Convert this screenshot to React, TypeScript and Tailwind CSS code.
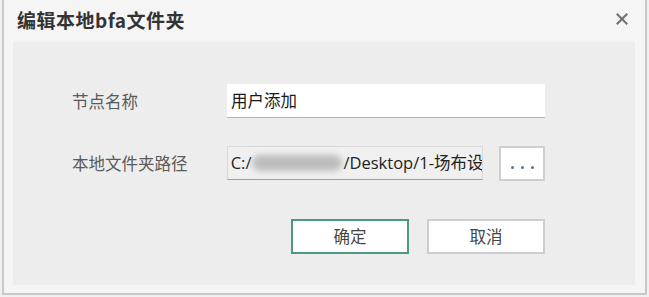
const cjk = { fontFamily: '"Noto Sans CJK SC", "Noto Sans", sans-serif' };
const path = { fontFamily: '"Open Sans", "Noto Sans CJK SC", sans-serif' };

function CloseIcon() {
  return (
    <svg width="12" height="12" viewBox="0 0 12 12" className="text-[#6f6f6f]">
      <path d="M1.5 1.5 L10.5 10.5 M10.5 1.5 L1.5 10.5" stroke="currentColor" strokeWidth="2" strokeLinecap="square" />
    </svg>
  );
}

export default function App() {
  return (
    <div className="w-[649px] h-[297px] bg-[#f0f0f0] px-[2px] pb-[2px]" style={cjk}>
      <div className="h-full flex flex-col bg-[#f5f5f5] border-x-2 border-b-2 border-[#c9c9c9]">
        {/* title */}
        <div className="h-[42px] flex items-center justify-between pl-[13px] pr-[17px]">
          <span className="text-[19px] font-bold text-[#333] tracking-[0.5px] -mt-[1px]">编辑本地bfa文件夹</span>
          <span className="-mt-[4px]"><CloseIcon /></span>
        </div>

        {/* body */}
        <div className="ml-[9px] mr-[10px] h-[243px] bg-[#ededed] pt-[42px] pl-[59px]">
          <div className="w-[473px] flex flex-col">
            <div className="flex items-center h-[34px]">
              <span className="w-[155px] text-[16.5px] text-[#5a5a5a]">节点名称</span>
              <div className="w-[318px] h-[34px] bg-white border-b border-[#b3b3b3] flex items-center pl-[4px] text-[16.5px] text-[#1a1a1a] -mt-[1px]">
                用户添加
              </div>
            </div>

            <div className="flex items-center h-[34px] mt-[28px]">
              <span className="w-[155px] text-[16.5px] text-[#5a5a5a]">本地文件夹路径</span>
              <div
                className="w-[257px] h-[34px] bg-[#f0f0f0] border border-[#d8d8d8] border-b-[#9e9e9e] flex items-center pl-[3px] overflow-hidden whitespace-nowrap text-[16.5px] text-[#222]"
                style={path}
              >
                <span>C:/</span>
                <span className="inline-block shrink-0 w-[90px] h-[16px] bg-[#bdbdbd] blur-[3px] rounded-full mx-[1px]" />
                <span>/Desktop/1-场布设</span>
              </div>
              <button className="ml-[16px] w-[46px] h-[35px] bg-white border-2 border-[#cfcfcf] flex items-center justify-center gap-[7px] pt-[9px]">
                <span className="w-[3px] h-[3px] rounded-full bg-[#5b7390]" />
                <span className="w-[3px] h-[3px] rounded-full bg-[#5b7390]" />
                <span className="w-[3px] h-[3px] rounded-full bg-[#5b7390]" />
              </button>
            </div>

            <div className="flex justify-end gap-[18px] mt-[39px]">
              <button className="w-[118px] h-[35px] bg-white border-2 border-[#4a9985] text-[16.5px] text-[#444]">确定</button>
              <button className="w-[118px] h-[35px] bg-white border-2 border-[#cdcdcd] text-[16.5px] text-[#444]">取消</button>
            </div>
          </div>
        </div>
      </div>
    </div>
  );
}
